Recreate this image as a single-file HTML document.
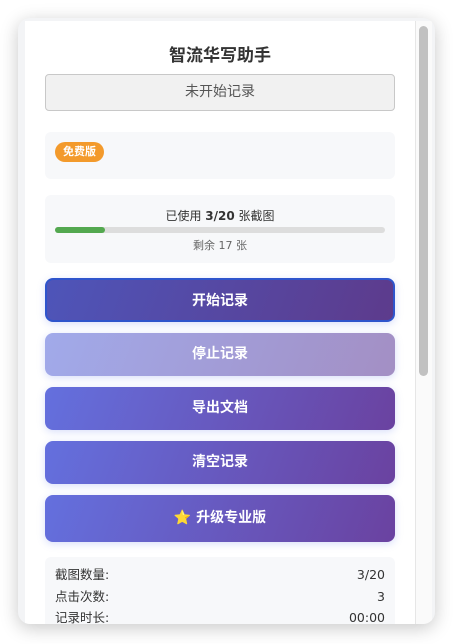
<!DOCTYPE html>
<html><head><meta charset="utf-8"><style>
*{box-sizing:border-box;margin:0;padding:0}
body{width:453px;height:644px;background:#fff;font-family:"DejaVu Sans","Noto Sans CJK SC",sans-serif;position:relative;overflow:hidden}
.win{position:absolute;left:18px;top:18px;width:417px;height:606px;border-radius:12px;background:#f3f4f6;box-shadow:0 4px 18px rgba(0,0,0,.22);overflow:hidden}
.content{position:absolute;left:7px;top:3px;width:390px;height:603px;background:#fff;overflow:hidden}
.sb{position:absolute;left:397px;top:3px;width:17px;height:603px;background:#fafafa;border-left:1px solid #e6e6e6}
.thumb{position:absolute;left:3px;top:5px;width:9px;height:350px;background:#c1c1c1;border-radius:5px}
h1{position:absolute;left:0;width:390px;top:20px;text-align:center;font-size:17px;font-weight:bold;color:#333}
.status{position:absolute;left:20px;top:53px;width:350px;height:37px;background:#f1f1f1;border:1px solid #c8c8c8;border-radius:4px;text-align:center;line-height:35px;font-size:14px;color:#555}
.box{position:absolute;left:20px;width:350px;background:#f7f8fa;border-radius:6px}
.badge{position:absolute;left:10px;top:10px;background:#f39a2c;color:#fff;font-size:11px;font-weight:bold;border-radius:10px;padding:0 8px;height:20px;line-height:20px}
.btn{position:absolute;left:20px;width:350px;border-radius:8px;background:linear-gradient(110deg,#6470de,#6a42a0);color:#fff;font-weight:bold;font-size:14px;text-align:center;box-shadow:0 2px 8px rgba(102,126,234,.25)}
.row{display:flex;justify-content:space-between;font-size:12.5px;color:#333;height:21.5px;line-height:21px}
</style></head><body>
<div class="win">
<div class="content">
<h1>智流华写助手</h1>
<div class="status">未开始记录</div>
<div class="box" style="top:111px;height:47px"><div class="badge">免费版</div></div>
<div class="box" style="top:174px;height:68px">
<div style="text-align:center;font-size:12px;color:#333;margin-top:12px">已使用 <b>3/20</b> 张截图</div>
<div style="position:absolute;left:10px;top:32px;width:330px;height:6px;background:#ddd;border-radius:3px"><div style="width:50px;height:6px;background:#53a84f;border-radius:3px"></div></div>
<div style="position:absolute;top:42px;width:350px;text-align:center;font-size:11px;color:#666">剩余 17 张</div>
</div>
<div class="btn" style="top:257px;height:44px;line-height:42px;background:linear-gradient(110deg,#4e55b9,#5d3b8c);border:2px solid #2f55cc">开始记录</div>
<div class="btn" style="top:312px;height:43px;line-height:43px;background:linear-gradient(110deg,#a1aaea,#a38fc4)">停止记录</div>
<div class="btn" style="top:366px;height:43px;line-height:43px">导出文档</div>
<div class="btn" style="top:420px;height:43px;line-height:43px">清空记录</div>
<div class="btn" style="top:474px;height:47px;line-height:47px">⭐ 升级专业版</div>
<div class="box" style="top:536px;height:80px;padding:7px 10px">
<div class="row"><span>截图数量:</span><span>3/20</span></div>
<div class="row"><span>点击次数:</span><span>3</span></div>
<div class="row"><span>记录时长:</span><span>00:00</span></div>
</div>
</div>
<div class="sb"><div class="thumb"></div></div>
</div>
</body></html>
